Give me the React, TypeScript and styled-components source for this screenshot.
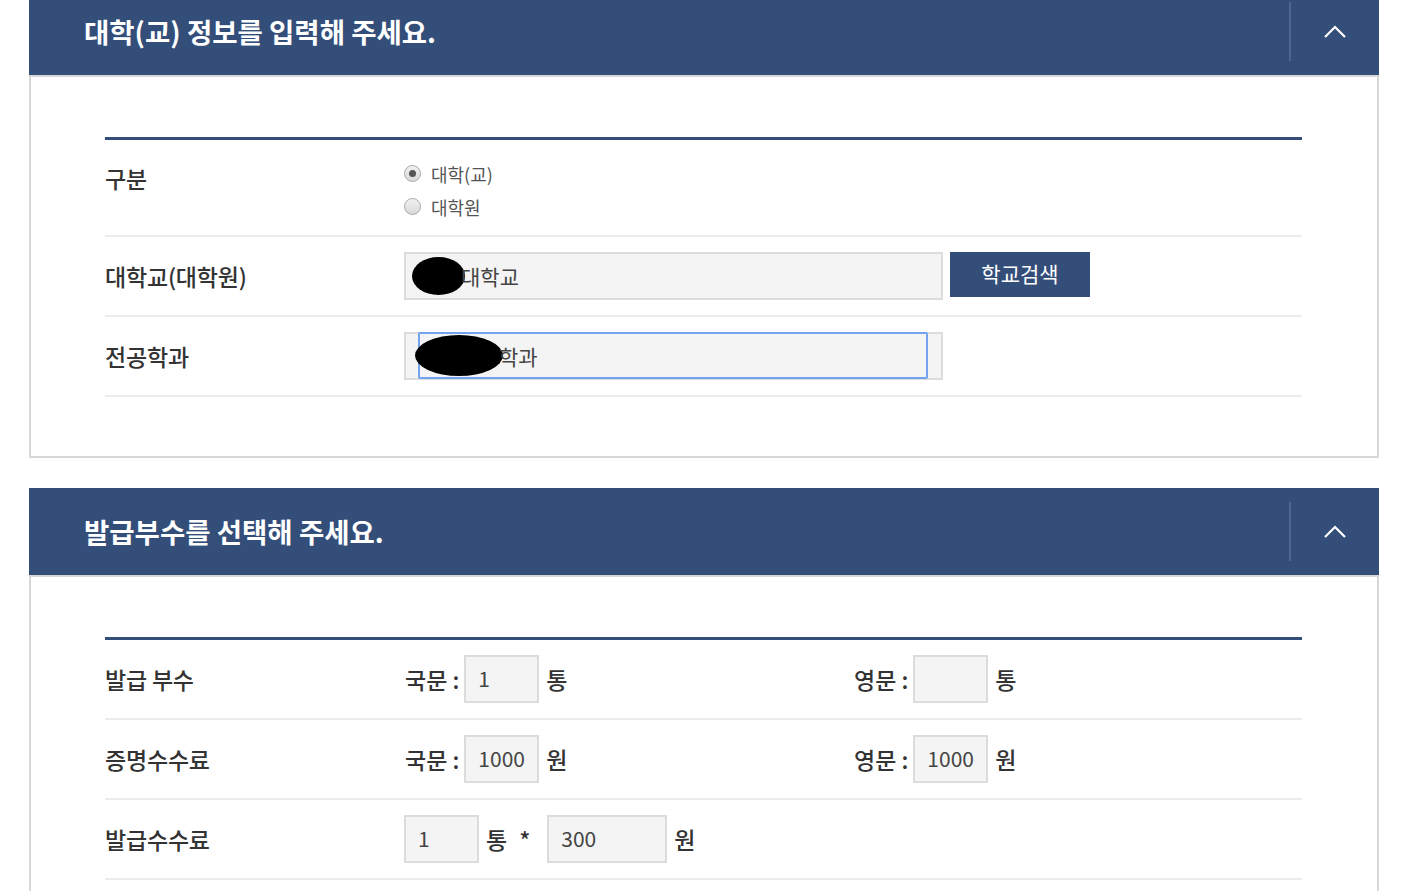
import React from "react";
import styled, { createGlobalStyle } from "styled-components";

const GlobalStyle = createGlobalStyle`
  html, body {
    margin: 0;
    padding: 0;
    background: #fff;
    font-family: "Noto Sans CJK KR", "Noto Sans", sans-serif;
    color: #333;
  }
`;

const Page = styled.main`
  width: 1350px;
  margin: -12px 0 0 29px;
`;

const Panel = styled.section`
  margin-bottom: 30px;
`;

const PanelHeader = styled.header`
  display: flex;
  align-items: center;
  height: 87px;
  background: #344e7a;
`;

const PanelTitle = styled.h2`
  flex: 1;
  margin: 0 0 2px;
  padding-left: 55px;
  color: #fff;
  font-size: 27.5px;
  font-weight: 700;
`;

const ToggleButton = styled.button`
  display: flex;
  align-items: center;
  justify-content: center;
  width: 90px;
  height: 59px;
  padding: 0;
  border: 0;
  border-left: 2px solid #4c6591;
  background: transparent;
  cursor: pointer;
`;

const PanelBody = styled.div`
  border: 2px solid #d7d7d7;
  padding: 60px 75px 59px 74px;
`;

const FormTable = styled.div`
  border-top: 3px solid #344e7a;
`;

const Row = styled.div<{ $pt?: number; $pb?: number }>`
  display: grid;
  grid-template-columns: 299px 1fr;
  padding: ${(p) => p.$pt ?? 15}px 0 ${(p) => p.$pb ?? 15}px;
  border-bottom: 2px solid #ececec;
`;

const Label = styled.div<{ $lh?: number }>`
  font-size: 23px;
  font-weight: 500;
  line-height: ${(p) => p.$lh ?? 48}px;
  color: #333;
  letter-spacing: -0.2px;
`;

const Value = styled.div`
  display: flex;
  align-items: flex-start;
`;

const RadioGroup = styled.div`
  padding-top: 1px;
`;

const RadioLine = styled.label`
  display: flex;
  align-items: center;
  height: 33px;
  gap: 10px;
  font-size: 18px;
  color: #555;
`;

const RadioDot = styled.span<{ $checked?: boolean }>`
  position: relative;
  width: 17px;
  height: 17px;
  box-sizing: border-box;
  border-radius: 50%;
  border: 1px solid #a9a9a9;
  background: linear-gradient(#f1f1f1, #d9d9d9);

  &::after {
    content: "";
    display: ${(p) => (p.$checked ? "block" : "none")};
    position: absolute;
    left: 4px;
    top: 4px;
    width: 7px;
    height: 7px;
    border-radius: 50%;
    background: #555;
  }
`;

const Field = styled.div<{ $width: number }>`
  box-sizing: border-box;
  display: flex;
  align-items: center;
  width: ${(p) => p.$width}px;
  height: 48px;
  padding: 0 7px 0 6px;
  border: 2px solid #dcdcdc;
  background: #f4f4f4;
  font-size: 21px;
  color: #444;
`;

const FocusBox = styled.div`
  box-sizing: border-box;
  display: flex;
  align-items: center;
  flex: 1;
  align-self: stretch;
  margin: -2px 6px -1px;
  border: 2px solid #74a4ef;
  border-radius: 2px;
`;

const Redacted = styled.span<{ $w: number; $h: number; $shift?: number }>`
  display: inline-block;
  flex: none;
  width: ${(p) => p.$w}px;
  height: ${(p) => p.$h}px;
  margin-left: ${(p) => p.$shift ?? 0}px;
  margin-right: -4px;
  border-radius: 50%;
  background: #000;
`;

const SearchButton = styled.button`
  width: 140px;
  height: 45px;
  margin-left: 7px;
  border: 0;
  background: #344e7a;
  color: #fff;
  font-family: inherit;
  font-size: 21px;
  padding-bottom: 5px;
  cursor: pointer;
`;

const Half = styled.div`
  display: flex;
  align-items: center;
  flex: 1;
  height: 48px;
`;

const Caption = styled.span`
  margin: 0 5px 0 1px;
  font-size: 23px;
  font-weight: 500;
  color: #333;
`;

const Unit = styled.span<{ $ml?: number }>`
  margin-left: ${(p) => p.$ml ?? 7}px;
  font-size: 23px;
  font-weight: 500;
  color: #333;
`;

const NumberInput = styled.input<{ $width: number; $ml?: number }>`
  box-sizing: border-box;
  width: ${(p) => p.$width}px;
  height: 48px;
  margin-left: ${(p) => p.$ml ?? 0}px;
  padding: 0 0 2px 12px;
  border: 2px solid #dcdcdc;
  background: #f4f4f4;
  font-family: inherit;
  font-size: 21px;
  color: #444;
  outline: none;
`;

const Chevron = () => (
  <svg width="22" height="13" viewBox="0 0 22 13" fill="none">
    <polyline points="1,12 11,2 21,12" stroke="#fff" strokeWidth="2.2" />
  </svg>
);

const SectionHead: React.FC<{ title: string }> = ({ title }) => (
  <PanelHeader>
    <PanelTitle>{title}</PanelTitle>
    <ToggleButton aria-label="접기">
      <Chevron />
    </ToggleButton>
  </PanelHeader>
);

export default function App() {
  return (
    <>
      <GlobalStyle />
      <Page>
        <Panel>
          <SectionHead title="대학(교) 정보를 입력해 주세요." />
          <PanelBody>
            <FormTable>
              <Row $pt={16} $pb={12}>
                <Label $lh={44}>구분</Label>
                <RadioGroup>
                  <RadioLine>
                    <RadioDot $checked />
                    대학(교)
                  </RadioLine>
                  <RadioLine>
                    <RadioDot />
                    대학원
                  </RadioLine>
                </RadioGroup>
              </Row>
              <Row>
                <Label>대학교(대학원)</Label>
                <Value>
                  <Field $width={539}>
                    <Redacted $w={53} $h={38} />
                    대학교
                  </Field>
                  <SearchButton>학교검색</SearchButton>
                </Value>
              </Row>
              <Row>
                <Label>전공학과</Label>
                <Value>
                  <Field $width={539}>
                    <FocusBox>
                      <Redacted $w={88} $h={41} $shift={-5} />
                      학과
                    </FocusBox>
                  </Field>
                </Value>
              </Row>
            </FormTable>
          </PanelBody>
        </Panel>

        <Panel>
          <SectionHead title="발급부수를 선택해 주세요." />
          <PanelBody>
            <FormTable>
              <Row>
                <Label>발급 부수</Label>
                <Value>
                  <Half>
                    <Caption>국문 :</Caption>
                    <NumberInput $width={75} defaultValue="1" />
                    <Unit>통</Unit>
                  </Half>
                  <Half>
                    <Caption>영문 :</Caption>
                    <NumberInput $width={75} defaultValue="" />
                    <Unit>통</Unit>
                  </Half>
                </Value>
              </Row>
              <Row>
                <Label>증명수수료</Label>
                <Value>
                  <Half>
                    <Caption>국문 :</Caption>
                    <NumberInput $width={75} defaultValue="1000" readOnly />
                    <Unit>원</Unit>
                  </Half>
                  <Half>
                    <Caption>영문 :</Caption>
                    <NumberInput $width={75} defaultValue="1000" readOnly />
                    <Unit>원</Unit>
                  </Half>
                </Value>
              </Row>
              <Row>
                <Label>발급수수료</Label>
                <Value>
                  <Half>
                    <NumberInput $width={75} defaultValue="1" readOnly />
                    <Unit>통</Unit>
                    <Unit $ml={12}>*</Unit>
                    <NumberInput $width={120} $ml={17} defaultValue="300" readOnly />
                    <Unit>원</Unit>
                  </Half>
                </Value>
              </Row>
            </FormTable>
          </PanelBody>
        </Panel>
      </Page>
    </>
  );
}
